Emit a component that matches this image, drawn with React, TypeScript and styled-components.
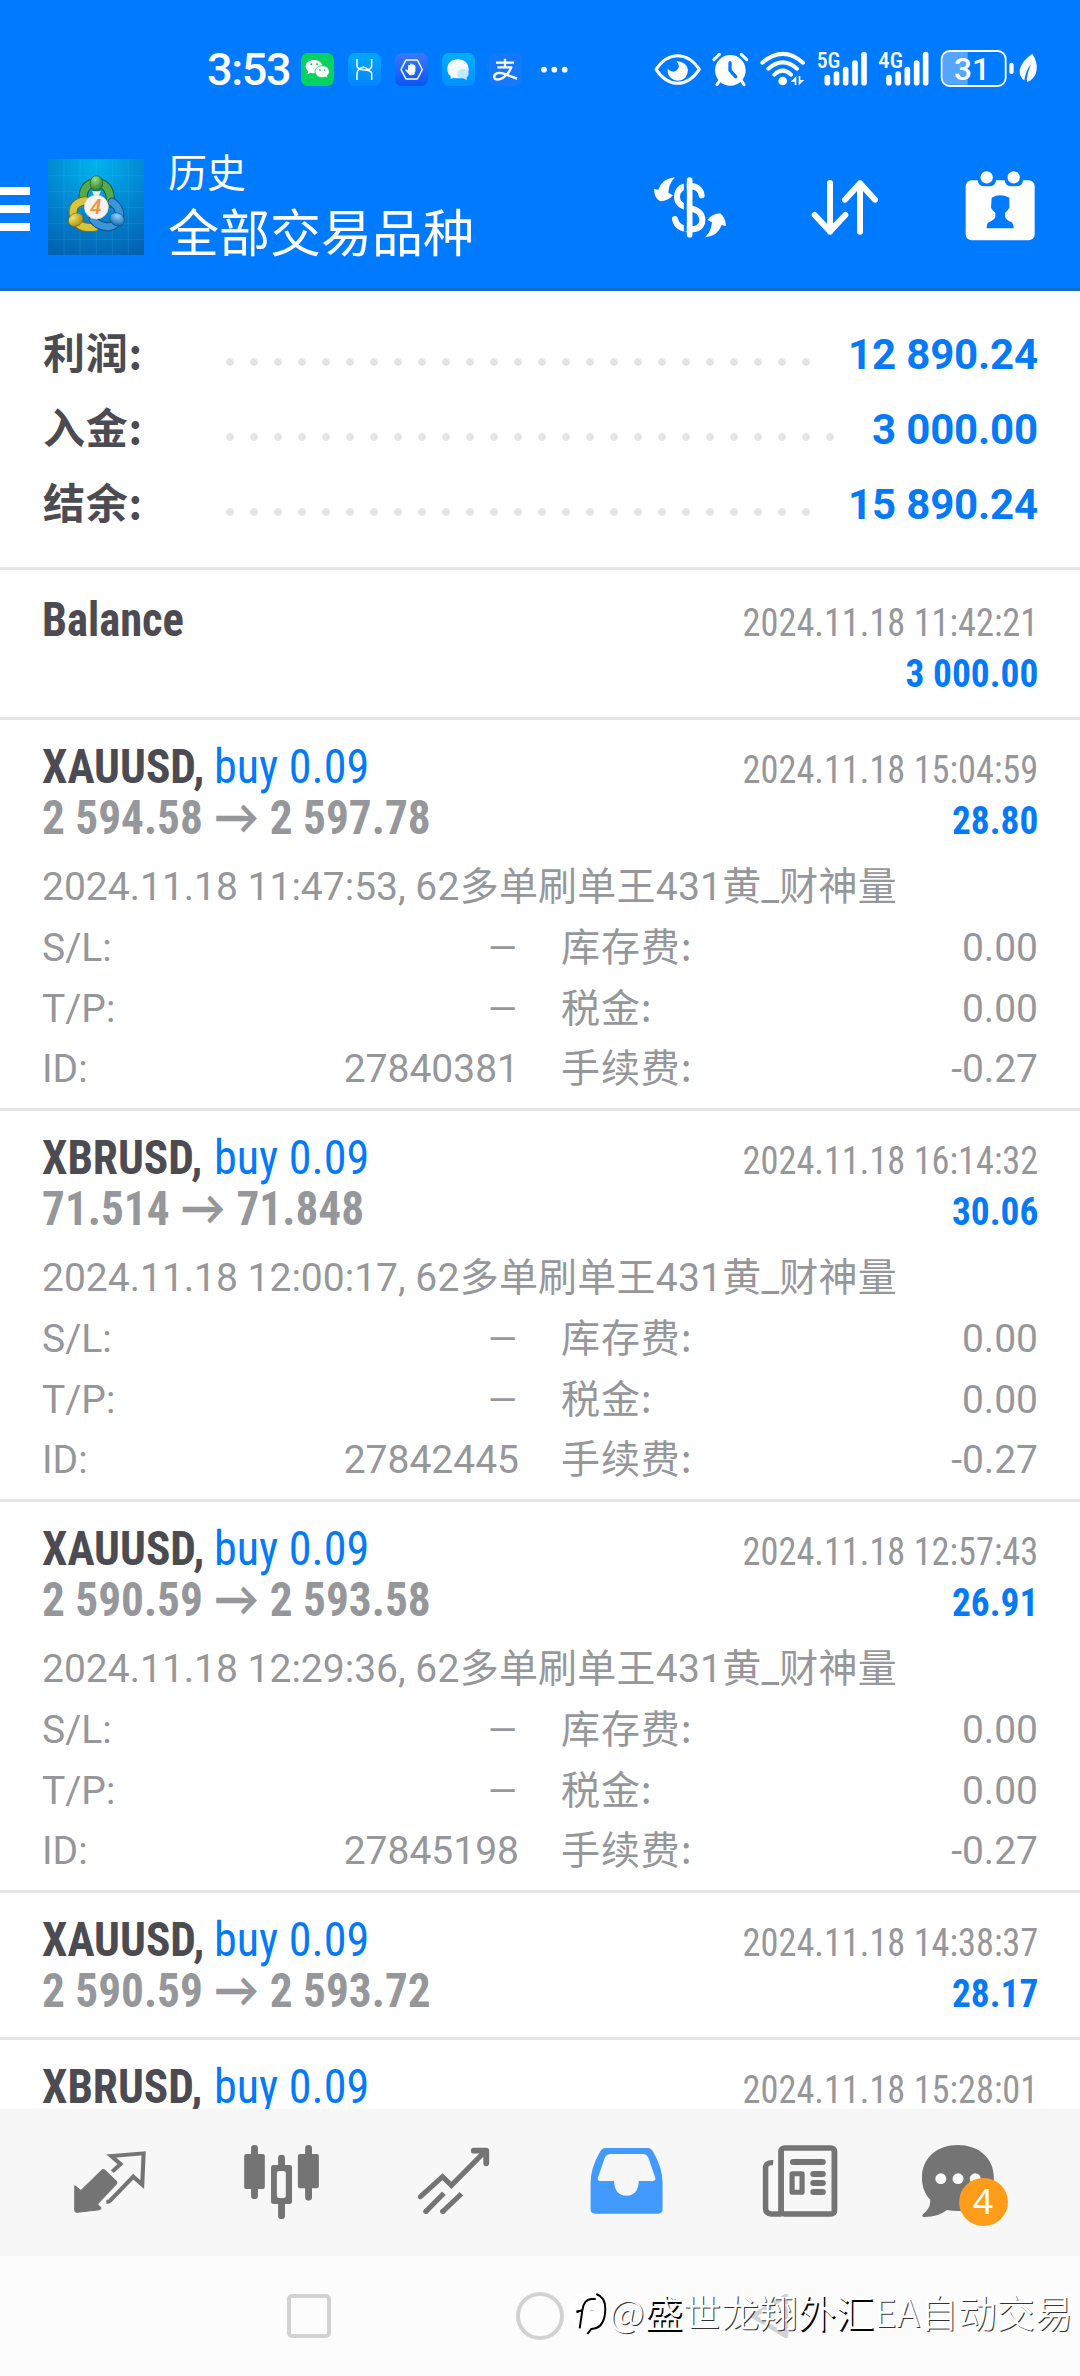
import React from 'react';
import styled, { createGlobalStyle } from 'styled-components';

const BLUE = '#007aff';
const VALUE = '#057af7';
const INK = '#4c4b52';
const GRAY = '#96979b';
const TAB = '#747474';
const latin = `Roboto, 'Noto Sans CJK SC', sans-serif`;
const condensed = `'Roboto Condensed', Roboto, 'Noto Sans CJK SC', sans-serif`;
const cjk = `'Noto Sans CJK SC', sans-serif`;

const GlobalStyle = createGlobalStyle`
  * { box-sizing: border-box; }
  body { margin: 0; background: #fff; font-family: ${latin}; }
  svg { display: block; flex: none; }
`;

const Screen = styled.div`
  width: 1080px;
  height: 2376px;
  display: flex;
  flex-direction: column;
  overflow: hidden;
  background: #fff;
`;

/* ---------- status bar ---------- */

const StatusBar = styled.div`
  flex: none;
  height: 126px;
  padding: 50px 42px 0 207px;
  background: ${BLUE};
  color: #fff;
  display: flex;
  justify-content: space-between;
  align-items: flex-start;
`;
const StatusLeft = styled.div`
  display: flex;
  gap: 13.7px;
`;
const Clock = styled.div`
  width: 80.3px;
  font: 460 45px/40px ${latin};
  letter-spacing: -1.3px;
  white-space: nowrap;
`;
const StatusRight = styled.div`
  display: flex;
  gap: 10.5px;

  & > :last-child {
    margin-left: -7px;
  }
`;

const StatusGlyph = ({ x, w, children }: { x: number; w: number; children: React.ReactNode }) => (
  <svg width={w / 3} height={112 / 3} viewBox={`${x} 60 ${w} 112`}>{children}</svg>
);

const NotificationIcons = () => (
  <>
    <StatusGlyph x={363} w={100}>
      <rect x="363" y="69" width="99" height="99" rx="20" fill="#07d160" />
      <path d="M402 90c-14 0-25 8-25 19 0 6 3 11 8 15l-3 9 10-5c3 1 7 2 10 2 14 0 25-9 25-21s-11-19-25-19z" fill="#fff" />
      <path d="M427 107c-12 0-22 8-22 18s10 18 22 18c3 0 6-1 8-2l8 4-2-7c4-3 7-8 7-13 0-10-9-18-21-18z" fill="#fff" stroke="#07d160" strokeWidth="2.5" />
      <g fill="#07c160"><circle cx="394" cy="103" r="3" /><circle cx="411" cy="103" r="3" /><circle cx="420" cy="120" r="2.6" /><circle cx="434" cy="120" r="2.6" /></g>
    </StatusGlyph>
    <StatusGlyph x={504} w={100}>
      <defs><linearGradient id="nb" x1="0" y1="0" x2="0" y2="1"><stop offset="0" stopColor="#00a8ff" /><stop offset="1" stopColor="#0485ff" /></linearGradient></defs>
      <rect x="504" y="69" width="99" height="99" rx="20" fill="url(#nb)" />
      <path d="M531 87v20q0 11 22 13 22 0 22-13V87M531 150v-20q0-13 22-20M575 150v-20q0-8-18-10M538 116q14-10 28 4" fill="none" stroke="#fff" strokeWidth="4.5" />
    </StatusGlyph>
    <StatusGlyph x={645} w={100}>
      <defs><linearGradient id="nc" x1="0" y1="0" x2="0" y2="1"><stop offset="0" stopColor="#3b78ff" /><stop offset="1" stopColor="#0a55f5" /></linearGradient></defs>
      <rect x="645" y="69" width="99" height="99" rx="20" fill="url(#nc)" />
      <path d="M678 90h34l15 28.500-15 28.500h-34l-15-28.500z" fill="none" stroke="#fff" strokeWidth="4.500" strokeLinejoin="round" />
      <path d="M685 106v16l-6-4c-3 0-4 2-2 4l11 12c3 3 14 3 16-2l1-26" fill="#fff" />
      <path d="M687 108v14M693 103v20M699 104v20M704 108v16" stroke="#fff" strokeWidth="4.500" strokeLinecap="round" />
    </StatusGlyph>
    <StatusGlyph x={786} w={100}>
      <defs><linearGradient id="nd" x1="0" y1="0" x2="0" y2="1"><stop offset="0" stopColor="#00b0ff" /><stop offset="1" stopColor="#0090ff" /></linearGradient></defs>
      <rect x="786" y="69" width="99" height="99" rx="20" fill="url(#nd)" />
      <path d="M834 88c-19 0-32 12-32 29 0 10 4 17 10 22v8l9-4c4 2 9 2 13 2 19 0 32-12 32-28s-13-29-32-29z" fill="#f4fbff" />
      <path d="M849 117c-10 0-17 6-17 14 0 9 7 14 17 14l11 5v-8c4-3 6-7 6-11 0-8-7-14-17-14z" fill="#c4e8ff" />
    </StatusGlyph>
    <StatusGlyph x={927} w={100}>
      <rect x="927" y="69" width="99" height="99" rx="20" fill="#1677ff" />
      <path d="M948 98h54M975 86v25M952 112h42q-8 20-26 32-14 8-23 2-6-8 2-14 9-6 24-1l40 15" fill="none" stroke="#fff" strokeWidth="7" strokeLinejoin="round" />
    </StatusGlyph>
    <StatusGlyph x={1064} w={100}>
      <g fill="#fff"><circle cx="1088" cy="119" r="8.500" /><circle cx="1119" cy="119" r="8.500" /><circle cx="1150" cy="119" r="8.500" /></g>
    </StatusGlyph>
  </>
);

const SignalBars = ({ x }: { x: number }) => (
  <path
    d={`M${x} 143V158M${x + 27.5} 132V158M${x + 55} 119V158M${x + 83} 99V158M${x + 110} 74V158`}
    stroke="#fff" strokeWidth="17" strokeLinecap="round"
  />
);

const SystemIcons = () => (
  <>
    <StatusGlyph x={70} w={142}>
      <path d="M76 118Q104 77 141 77t65 41Q178 160 141 160T76 118z" fill="none" stroke="#fff" strokeWidth="9" strokeLinejoin="round" />
      <path d="M137 93q14 15 2 27-12 12-28-4-2 16 9 27 9 9 22 9 29-3 30-33-3-23-35-26z" fill="#fff" />
    </StatusGlyph>
    <StatusGlyph x={245} w={112}>
      <circle cx="300" cy="121" r="46" fill="#fff" />
      <path d="M251 89l16-16M333 73l16 16M268 152l-8 12M333 152l8 12" stroke="#fff" strokeWidth="9" strokeLinecap="round" />
      <path d="M299 98v23l17 19" fill="none" stroke={BLUE} strokeWidth="10" strokeLinecap="round" strokeLinejoin="round" />
    </StatusGlyph>
    <StatusGlyph x={388} w={136}>
      <path d="M395 98q61-53 122 0M413 116q43-38 86 0M431 134q25-24 50 0" fill="none" stroke="#fff" strokeWidth="12" strokeLinecap="round" />
      <circle cx="456" cy="153" r="13" fill="#fff" />
      <path d="M480 155l17-17v27h-5v-10zM521 150l-17 16v-28h5v12z" fill="#fff" />
    </StatusGlyph>
    <StatusGlyph x={555} w={156}>
      <text x="557" y="114" fill="#fff" fontFamily={condensed} fontWeight="500" fontSize="66" textLength="71" lengthAdjust="spacingAndGlyphs">5G</text>
      <SignalBars x={589} />
    </StatusGlyph>
    <StatusGlyph x={742} w={153}>
      <text x="743" y="114" fill="#fff" fontFamily={condensed} fontWeight="500" fontSize="66" textLength="74" lengthAdjust="spacingAndGlyphs">4G</text>
      <SignalBars x={775} />
    </StatusGlyph>
    <StatusGlyph x={928} w={222}>
      <path d="M1011 66H956q-20 0-20 20v58q0 20 20 20h55z" fill="#55a6ff" />
      <rect x="933" y="63" width="192" height="105" rx="24" fill="none" stroke="#fff" strokeWidth="5.500" />
      <rect x="1136" y="98" width="13" height="34" rx="6" fill="#fff" />
      <text x="1024" y="149" textAnchor="middle" fill="#fff" fontFamily={latin} fontWeight="500" fontSize="95" textLength="108" lengthAdjust="spacingAndGlyphs">31</text>
    </StatusGlyph>
    <StatusGlyph x={1160} w={62}>
      <path d="M1206 71q16 26 13 48-4 28-28 37l-2-8q4-26 13-46-16 20-20 49-15-8-14-30 4-26 38-50z" fill="#fff" />
    </StatusGlyph>
  </>
);

/* ---------- app bar ---------- */

const AppBar = styled.header`
  flex: none;
  height: 165px;
  background: ${BLUE};
  border-bottom: 3px solid #186cc9;
  display: flex;
  align-items: center;
  color: #fff;
`;
const MenuButton = styled.div`
  width: 30px;
  margin: 4px 18px 0 0;
  display: flex;
  flex-direction: column;
  gap: 10px;
`;
const MenuLine = styled.span`
  height: 8px;
  background: #fff;
`;
const Titles = styled.div`
  margin: 0 0 14px 24px;
  display: flex;
  flex-direction: column;
  font-family: ${cjk};
  white-space: nowrap;
`;
const Caption = styled.div`
  font-size: 39px;
  line-height: 60px;
`;
const Title = styled.div`
  font-size: 51px;
  line-height: 60px;
`;
const Actions = styled.div`
  margin-left: auto;
  padding-right: 41.7px;
  display: flex;
  gap: 79px;
`;

const AppLogo = () => (
  <svg width="96" height="96" viewBox="144 87 288 288">
    <defs>
      <radialGradient id="lb" cx="0.5" cy="0.05" r="1"><stop offset="0" stopColor="#00b4ee" /><stop offset="0.55" stopColor="#0284cf" /><stop offset="1" stopColor="#0263b3" /></radialGradient>
      <radialGradient id="lg" cx="0.4" cy="0.25" r="0.8"><stop offset="0" stopColor="#9be07c" /><stop offset="1" stopColor="#23722d" /></radialGradient>
      <radialGradient id="ly" cx="0.4" cy="0.25" r="0.8"><stop offset="0" stopColor="#f2e46a" /><stop offset="1" stopColor="#a58a12" /></radialGradient>
      <radialGradient id="lc" cx="0.4" cy="0.25" r="0.8"><stop offset="0" stopColor="#8fd4fa" /><stop offset="1" stopColor="#0f62a8" /></radialGradient>
    </defs>
    <rect x="144" y="87" width="288" height="288" fill="url(#lb)" />
    <path d="M192 87v288M240 87v288M289 87v288M337 87v288M385 87v288M144 136h288M144 184h288M144 232h288M144 280h288M144 328h288" stroke="#4fc3f0" strokeOpacity="0.28" strokeWidth="2" />
    <g fill="none" strokeLinecap="round">
      <path d="M250 214q-6-50 39-58 46 8 42 64" stroke="#1d5f2c" strokeWidth="27" />
      <path d="M250 214q-6-50 39-58 46 8 42 64" stroke="#55ab4c" strokeWidth="21" />
      <path d="M256 212q-42 6-36 44 10 42 64 36" stroke="#7d6c10" strokeWidth="27" />
      <path d="M256 212q-42 6-36 44 10 42 64 36" stroke="#d6c53e" strokeWidth="21" />
      <path d="M336 216q26 18 23 44-14 42-58 26-14-6-22-18" stroke="#0c4f8c" strokeWidth="27" />
      <path d="M336 216q26 18 23 44-14 42-58 26-14-6-22-18" stroke="#3a96d8" strokeWidth="21" />
    </g>
    <ellipse cx="289" cy="160" rx="19" ry="23" fill="url(#lg)" stroke="#1d5f2c" strokeWidth="2" />
    <path d="M276 184h27l-7 14h-13z" fill="#e8f5e0" />
    <ellipse cx="227" cy="269" rx="23" ry="19" transform="rotate(-30 227 269)" fill="url(#ly)" stroke="#7d6c10" strokeWidth="2" />
    <ellipse cx="351" cy="268" rx="23" ry="19" transform="rotate(30 351 268)" fill="url(#lc)" stroke="#0c4f8c" strokeWidth="2" />
    <circle cx="289" cy="231" r="36" fill="#f6f4f0" stroke="#cfcac0" strokeWidth="2" />
    <text x="287" y="252" textAnchor="middle" fontFamily={latin} fontWeight="600" fontStyle="italic" fontSize="62" fill="#f5933c">4</text>
  </svg>
);

const HeaderGlyph = ({ x, children }: { x: number; children: React.ReactNode }) => (
  <svg width="76" height="76" viewBox={`${x} 86 228 228`}>{children}</svg>
);

const CurrencyIcon = () => (
  <HeaderGlyph x={96}>
    <path d="M245 165q-3-27-38-29-36 3-36 34 0 24 33 32 43 8 43 36 0 29-38 29-39-2-44-31" fill="none" stroke="#fff" strokeWidth="18" strokeLinecap="round" />
    <path d="M196 122v152" stroke={BLUE} strokeWidth="9" />
    <path d="M209 119v164" stroke="#fff" strokeWidth="17" strokeLinecap="round" />
    <path d="M165 111q-38 3-50 37l-13-2q1 30 20 37 22-1 37-18l-14-8q2-29 20-46z" fill="#fff" />
    <path d="M255 291q38-3 50-37l13 3q-3-29-18-38-22 1-38 19l14 8q-2 28-21 45z" fill="#fff" />
  </HeaderGlyph>
);
const SortIcon = () => (
  <HeaderGlyph x={564}>
    <path d="M633 128v146M587 224l46 49 46-49M723 274V129M678 178l45-49 45 49" fill="none" stroke="#fff" strokeWidth="18" strokeLinecap="round" strokeLinejoin="round" />
  </HeaderGlyph>
);
const CalendarIcon = () => (
  <HeaderGlyph x={1027}>
    <rect x="1038" y="120" width="207" height="180" rx="18" fill="#fff" />
    <path d="M1074 110v10q2 18 20 18h14q20 0 21-18v-10zM1155 110v10q2 18 20 18h14q20 0 21-18v-10z" fill={BLUE} />
    <circle cx="1101" cy="111" r="18.500" fill="#fff" />
    <circle cx="1182" cy="111" r="18.500" fill="#fff" />
    <path d="M1116 172q25-14 53 0v30q-5 8-13 16v11q2 9 19 16 7 5 7 19h-81q-1-14 7-19 17-7 19-16v-11q-9-8-13-16z" fill={BLUE} />
  </HeaderGlyph>
);

/* ---------- summary ---------- */

const Summary = styled.section`
  flex: none;
  padding: 26px 42px 25px;
  border-bottom: 3px solid #e5e5e5;
`;
const SummaryRow = styled.div`
  height: 75px;
  display: flex;
  align-items: baseline;
`;
const SummaryLabel = styled.div`
  width: 176px;
  padding-left: 1px;
  font: 700 42px/67px ${cjk};
  letter-spacing: 0.8px;
  color: ${INK};
`;
const Leader = styled.div`
  flex: 1;
  align-self: flex-start;
  height: 8px;
  margin: 41px 26px 0 0;
  background: radial-gradient(circle at 12px 4px, #e5e5e5 3.500px, transparent 4.200px) 0 0 / 24px 8px repeat-x;
`;
const SummaryValue = styled.div`
  font: 700 42px/75px ${latin};
  letter-spacing: -0.15px;
  color: ${VALUE};
`;

/* ---------- history list ---------- */

const List = styled.main`
  flex: 1;
  min-height: 0;
  overflow: hidden;
`;
const Item = styled.article`
  padding: 21px 42px 8px;
  border-top: 3px solid #e5e5e5;
  color: ${GRAY};
`;
const Head = styled.div<{ $closed?: boolean }>`
  display: flex;
  justify-content: space-between;
  height: ${p => (p.$closed ? 115 : 116.3)}px;
`;
const HeadLeft = styled.div`
  font: 700 48px/51px ${condensed};
  white-space: nowrap;
`;
const TitleLine = styled.div`
  display: flex;
  height: 51px;
`;
const Squeeze = styled.span<{ $x: number; $from?: string }>`
  display: block;
  transform: scaleX(${p => p.$x});
  transform-origin: ${p => p.$from ?? 'left'};
`;
const Symbol = styled(Squeeze)`
  width: 172px;
  color: ${INK};
`;
const Side = styled(Squeeze)`
  font-weight: 400;
  color: ${VALUE};
`;
const Arrow = styled.span`
  font-family: Lato, sans-serif;
  line-height: 0;
  margin: 0 11.500px;
`;
const HeadRight = styled.div`
  padding-top: 4px;
  font: 400 39px/51px ${condensed};
  text-align: right;
  white-space: nowrap;
`;
const Profit = styled(Squeeze)`
  font-weight: 700;
  color: ${VALUE};
`;
const Comment = styled.div`
  font: 400 39px/60.67px ${latin};
  white-space: nowrap;
`;
const Note = styled.span`
  letter-spacing: 0.23px;
`;
const Details = styled.div`
  display: grid;
  grid-template-columns: 1fr 1fr;
  column-gap: 42px;
`;
const Detail = styled.div`
  height: 60.67px;
  display: flex;
  justify-content: space-between;
  align-items: baseline;
  font: 400 39px/60.67px ${latin};
`;
const CjkLabel = styled.span`
  font-family: ${cjk};
  line-height: 50px;
  letter-spacing: 0.9px;
`;
const Dash = styled.span`
  font-size: 37px;
  margin-right: 2px;
`;

interface Trade {
  symbol: string;
  from: string;
  to: string;
  closed: string;
  profit: string;
  opened?: string;
  id?: string;
}

const trades: Trade[] = [
  { symbol: 'XAUUSD,', from: '2 594.58', to: '2 597.78', closed: '2024.11.18 15:04:59', profit: '28.80', opened: '2024.11.18 11:47:53', id: '27840381' },
  { symbol: 'XBRUSD,', from: '71.514', to: '71.848', closed: '2024.11.18 16:14:32', profit: '30.06', opened: '2024.11.18 12:00:17', id: '27842445' },
  { symbol: 'XAUUSD,', from: '2 590.59', to: '2 593.58', closed: '2024.11.18 12:57:43', profit: '26.91', opened: '2024.11.18 12:29:36', id: '27845198' },
  { symbol: 'XAUUSD,', from: '2 590.59', to: '2 593.72', closed: '2024.11.18 14:38:37', profit: '28.17' },
];

const Result = ({ time, profit }: { time: string; profit?: string }) => (
  <HeadRight>
    <Squeeze $x={0.932} $from="right">{time}</Squeeze>
    {profit && <Profit $x={0.958} $from="right">{profit}</Profit>}
  </HeadRight>
);

const TradeTitle = ({ symbol }: { symbol: string }) => (
  <TitleLine>
    <Symbol $x={0.945}>{symbol}</Symbol>
    <Side $x={0.96}>buy 0.09</Side>
  </TitleLine>
);

const TradeItem = ({ t }: { t: Trade }) => (
  <Item>
    <Head $closed={!t.opened}>
      <HeadLeft>
        <TradeTitle symbol={t.symbol} />
        <Squeeze $x={0.943}>{t.from}<Arrow>→</Arrow>{t.to}</Squeeze>
      </HeadLeft>
      <Result time={t.closed} profit={t.profit} />
    </Head>
    {t.opened && (
      <>
        <Comment>{t.opened}, <Note>62多单刷单王431黄_财神量</Note></Comment>
        <Details>
          <Detail><span>S/L:</span><Dash>—</Dash></Detail>
          <Detail><CjkLabel>库存费:</CjkLabel><span>0.00</span></Detail>
          <Detail><span>T/P:</span><Dash>—</Dash></Detail>
          <Detail><CjkLabel>税金:</CjkLabel><span>0.00</span></Detail>
          <Detail><span>ID:</span><span>{t.id}</span></Detail>
          <Detail><CjkLabel>手续费:</CjkLabel><span>-0.27</span></Detail>
        </Details>
      </>
    )}
  </Item>
);

const BalanceItem = styled(Item)`
  border-top: 0;
  padding-top: 24px;
`;

/* ---------- bottom tabs ---------- */

const TabBar = styled.nav`
  flex: none;
  height: 147px;
  padding: 0 24px;
  background: #f7f7f7;
  display: grid;
  grid-template-columns: repeat(6, 1fr);
  justify-items: center;
`;

const TabGlyph = ({ x, children }: { x: number; children: React.ReactNode }) => (
  <svg width="96" height="147" viewBox={`${x} 207 278.800 441`} preserveAspectRatio="none">{children}</svg>
);

const Tabs = () => (
  <TabBar>
    <TabGlyph x={180}>
      <path d="M217 437l18 15 61-62q4-3 8 0l34 34q3 4 0 8l-53 58q-2 3 0 5l7 7q3 4-3 7l-64 8q-8 0-8-7z" fill={TAB} stroke={TAB} strokeWidth="3" strokeLinejoin="round" />
      <path d="M326 395l24-23-27-24 94-8-4 94-26-24-67 72q-4 4-11 4" fill="none" stroke={TAB} strokeWidth="12" />
    </TabGlyph>
    <TabGlyph x={679.5}>
      <path d="M739 325v142M896 325v147M817.500 354v30M817.500 484v43" stroke={TAB} strokeWidth="20" strokeLinecap="round" />
      <rect x="709" y="342" width="60" height="105" rx="6" fill={TAB} />
      <rect x="865" y="342" width="61" height="103" rx="6" fill={TAB} />
      <rect x="787" y="375" width="61" height="117" rx="7" fill={TAB} />
      <rect x="804" y="393" width="26" height="81" rx="7" fill="#f7f7f7" />
    </TabGlyph>
    <TabGlyph x={1179}>
      <path d="M1221 470l64-60 26 26 98-102" fill="none" stroke={TAB} strokeWidth="15" strokeLinecap="round" />
      <path d="M1376 332h36v38" fill="none" stroke={TAB} strokeWidth="17" strokeLinecap="round" strokeLinejoin="round" />
      <path d="M1236 515l53-55M1285 515l55-54" stroke={TAB} strokeWidth="15" />
      <circle cx="1237" cy="514" r="8" fill={TAB} /><circle cx="1286" cy="514" r="8" fill={TAB} />
    </TabGlyph>
    <TabGlyph x={110.4}>
      <path d="M190 324h123q10 0 16 12 27 48 27 92v80q0 13-13 13H160q-13 0-13-13v-80q0-44 27-92 6-12 16-12z" fill="#429aff" />
      <path d="M206 342h92q12 0 17 12l20 60q1 9-8 9h-40q-2 44-36 44t-36-44h-40q-9 0-7-9l20-60q5-12 18-12z" fill="#f7f7f7" />
    </TabGlyph>
    <TabGlyph x={609.8}>
      <rect x="700" y="324" width="155" height="198" rx="10" fill="none" stroke={TAB} strokeWidth="17" />
      <path d="M677 368q-22-2-22 17v120q0 17 17 17h30" fill="none" stroke={TAB} strokeWidth="16" />
      <path d="M735 366h86M794 402h27M794 429h27M794 456h27" stroke={TAB} strokeWidth="18" strokeLinecap="round" />
      <rect x="732" y="401" width="29" height="56" rx="1" fill="none" stroke={TAB} strokeWidth="15" strokeLinejoin="round" />
    </TabGlyph>
    <TabGlyph x={1109.3}>
      <path d="M1213 315c-62 0-104 41-104 98 0 27 9 49 24 66q2 27-21 44-5 8 3 8 40 1 67-21 15 3 31 3c63 0 105-43 105-100s-42-98-105-98z" fill={TAB} />
      <g fill="#fff"><circle cx="1164" cy="416" r="16" /><circle cx="1214" cy="416" r="16" /><circle cx="1264" cy="416" r="16" /></g>
      <ellipse cx="1288" cy="486" rx="71" ry="72" fill="#ff9d1a" />
      <text x="1286" y="522" textAnchor="middle" fill="#fff" fontFamily="'Noto Sans', sans-serif" fontSize="103">4</text>
    </TabGlyph>
  </TabBar>
);

/* ---------- system navigation ---------- */

const SystemNav = styled.div`
  flex: none;
  position: relative;
  height: 120px;
  padding-left: 287px;
  background: #fcfcfc;
  display: flex;
  align-items: center;
  gap: 185px;
`;
const NavSquare = styled.span`
  width: 44px;
  height: 44px;
  border: 4px solid #d2d2d2;
  border-radius: 5px;
`;
const NavCircle = styled.span`
  width: 48px;
  height: 48px;
  border: 4px solid #d2d2d2;
  border-radius: 50%;
`;
const Watermark = styled.div`
  position: absolute;
  left: 567px;
  top: 32px;
  display: flex;
  align-items: center;
  font: 350 38px/56px ${cjk};
  letter-spacing: 0.25px;
  color: #fff;
  white-space: nowrap;
  text-shadow: 1px 1px 0.5px #333;
`;
const Strong = styled.span`
  text-shadow: 1.5px 1.5px 0 #000;
`;
const Handle = styled.span`
  margin-top: -5px;
`;

export default function App() {
  return (
    <>
      <GlobalStyle />
      <Screen>
        <StatusBar>
          <StatusLeft>
            <Clock>3:53</Clock>
            <NotificationIcons />
          </StatusLeft>
          <StatusRight><SystemIcons /></StatusRight>
        </StatusBar>
        <AppBar>
          <MenuButton><MenuLine /><MenuLine /><MenuLine /></MenuButton>
          <AppLogo />
          <Titles>
            <Caption>历史</Caption>
            <Title>全部交易品种</Title>
          </Titles>
          <Actions><CurrencyIcon /><SortIcon /><CalendarIcon /></Actions>
        </AppBar>
        <Summary>
          {[['利润:', '12 890.24'], ['入金:', '3 000.00'], ['结余:', '15 890.24']].map(([k, v]) => (
            <SummaryRow key={k}>
              <SummaryLabel>{k}</SummaryLabel>
              <Leader />
              <SummaryValue>{v}</SummaryValue>
            </SummaryRow>
          ))}
        </Summary>
        <List>
          <BalanceItem>
            <Head $closed>
              <HeadLeft><Symbol $x={0.928}>Balance</Symbol></HeadLeft>
              <Result time="2024.11.18 11:42:21" profit="3 000.00" />
            </Head>
          </BalanceItem>
          {trades.map((t, i) => <TradeItem key={i} t={t} />)}
          <Item>
            <Head $closed>
              <HeadLeft><TradeTitle symbol="XBRUSD," /></HeadLeft>
              <Result time="2024.11.18 15:28:01" />
            </Head>
          </Item>
        </List>
        <Tabs />
        <SystemNav>
          <NavSquare />
          <NavCircle />
          <svg width="42" height="48" viewBox="0 0 42 48">
            <path d="M4 24L37 4v40z" fill="none" stroke="#d2d2d2" strokeWidth="4.500" strokeLinejoin="round" />
          </svg>
          <Watermark>
            <svg width="42" height="46" viewBox="18 46 126 138">
              <circle cx="84" cy="105" r="58" fill="#fff" />
              <path d="M46 108l18-4q5-34 28-34h12M64 104l-8 54M50 104v8M106 55q27 10 27 44 0 32-14 49-9 10-28 12l-12 15" fill="none" stroke="#000" strokeWidth="6" />
              <path d="M88 105h10" stroke="#bbb" strokeWidth="3" />
            </svg>
            <Handle>@<Strong>盛</Strong>世龙翔<Strong>外汇</Strong>EA自动交易</Handle>
          </Watermark>
        </SystemNav>
      </Screen>
    </>
  );
}
